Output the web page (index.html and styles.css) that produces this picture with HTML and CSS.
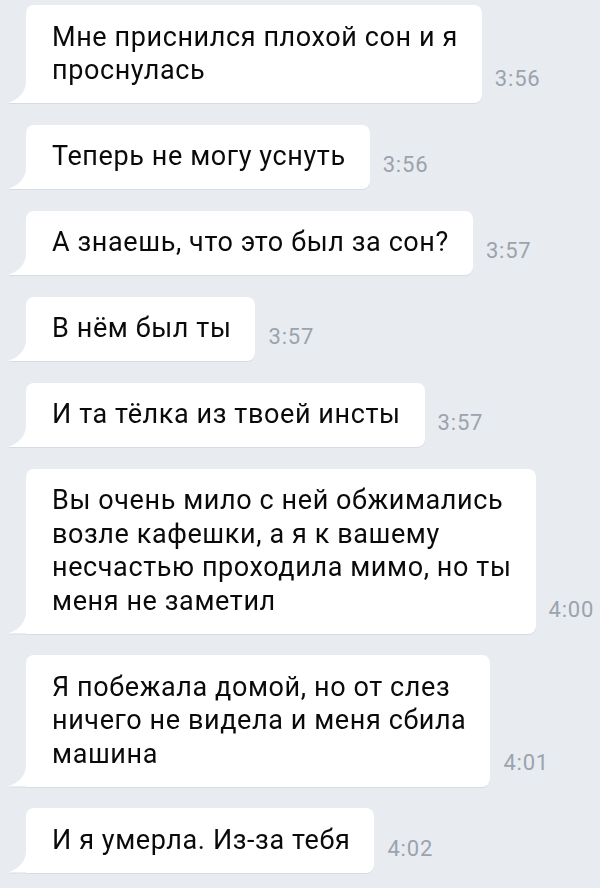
FILE: index.html
```html
<!DOCTYPE html>
<html lang="ru">
<head>
    <meta charset="UTF-8">
    <meta name="viewport" content="width=device-width, initial-scale=1.0">
    <title>Сообщения</title>
    <link rel="stylesheet" href="styles.css">
</head>
<body>
    <div class="chat">
        <div class="msg">
            <div class="bubble">Мне приснился плохой сон и я<br>проснулась</div>
            <span class="time">3:56</span>
        </div>
        <div class="msg">
            <div class="bubble">Теперь не могу уснуть</div>
            <span class="time">3:56</span>
        </div>
        <div class="msg">
            <div class="bubble">А знаешь, что это был за сон?</div>
            <span class="time">3:57</span>
        </div>
        <div class="msg">
            <div class="bubble">В нём был ты</div>
            <span class="time">3:57</span>
        </div>
        <div class="msg">
            <div class="bubble">И та тёлка из твоей инсты</div>
            <span class="time">3:57</span>
        </div>
        <div class="msg">
            <div class="bubble">Вы очень мило с ней обжимались<br>возле кафешки, а я к вашему<br>несчастью проходила мимо, но ты<br>меня не заметил</div>
            <span class="time">4:00</span>
        </div>
        <div class="msg">
            <div class="bubble">Я побежала домой, но от слез<br>ничего не видела и меня сбила<br>машина</div>
            <span class="time">4:01</span>
        </div>
        <div class="msg">
            <div class="bubble">И я умерла. Из-за тебя</div>
            <span class="time">4:02</span>
        </div>
    </div>
</body>
</html>
```

FILE: styles.css
```css
* {
    margin: 0;
    padding: 0;
    box-sizing: border-box;
}

body {
    font-family: Roboto, "Noto Sans", sans-serif;
    background: #e8ecf1;
    min-height: 100vh;
}

/* лента сообщений */
.chat {
    display: flex;
    flex-direction: column;
    gap: 21.5px;
    padding: 5px 0 0 26px;
}

.msg {
    display: flex;
    align-items: flex-end;
}

/* пузырь входящего сообщения */
.bubble {
    position: relative;
    background: #fff;
    color: #0a0a0a;
    font-size: 27px;
    letter-spacing: 0.6px;
    line-height: 33.5px;
    padding: 15.5px 24px 15.5px 26px;
    border-radius: 8px 8px 8px 0;
    white-space: nowrap;
    filter: drop-shadow(0 1px 0 #d6dce3);
}

/* хвостик снизу слева */
.bubble::before {
    content: "";
    position: absolute;
    left: -18px;
    bottom: 0;
    width: 19px;
    height: 22px;
    background: #fff;
    clip-path: path('M18 0 C18 10 12 18 0 22 L19 22 L19 0 Z');
}

.time {
    color: #9ba3ad;
    font-size: 22px;
    letter-spacing: 0.8px;
    line-height: 20px;
    margin: 0 0 14px 13px;
}
```
